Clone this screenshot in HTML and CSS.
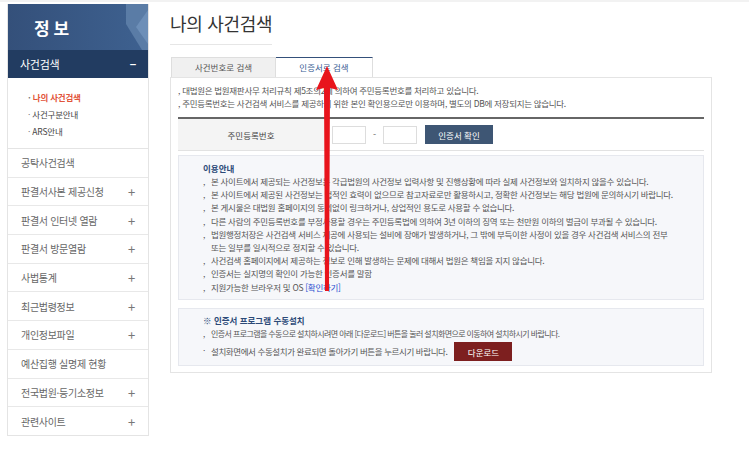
FILE: index.html
```html
<!DOCTYPE html>
<html lang="ko">
<head>
    <meta charset="UTF-8">
    <title>나의 사건검색</title>
    <link rel="stylesheet" href="styles.css">
</head>
<body>
    <div class="page">
        <div class="sidebar">
            <div class="side-head">
                <span>정 보</span>
                <svg class="side-deco" width="40" height="46" viewBox="0 0 40 46">
                    <polygon points="18,0 40,0 40,46 34,46 18,20" fill="#5a7ca6"/>
                    <polygon points="40,6 40,40 28,23" fill="#6d8fb8"/>
                </svg>
            </div>
            <div class="menu-open">사건검색 <span>−</span></div>
            <ul class="submenu">
                <li class="on">나의 사건검색</li>
                <li>사건구분안내</li>
                <li>ARS안내</li>
            </ul>
            <ul class="menu">
                <li>공탁사건검색</li>
                <li>판결서사본 제공신청 <span>+</span></li>
                <li>판결서 인터넷 열람 <span>+</span></li>
                <li>판결서 방문열람 <span>+</span></li>
                <li>사법통계 <span>+</span></li>
                <li>최근법령정보 <span>+</span></li>
                <li>개인정보파일 <span>+</span></li>
                <li>예산집행 실명제 현황</li>
                <li>전국법원·등기소정보 <span>+</span></li>
                <li>관련사이트 <span>+</span></li>
            </ul>
        </div>

        <div class="content">
            <h1>나의 사건검색</h1>
            <div class="tabs">
                <div class="tab">사건번호로 검색</div>
                <div class="tab active">인증서로 검색</div>
            </div>
            <div class="panel">
                <p class="notice">, 대법원은 법원재판사무 처리규칙 제5조의2에 의하여 주민등록번호를 처리하고 있습니다.</p>
                <p class="notice">, 주민등록번호는 사건검색 서비스를 제공하기 위한 본인 확인용으로만 이용하며, 별도의 DB에 저장되지는 않습니다.</p>

                <div class="form-row">
                    <div class="label">주민등록번호</div>
                    <div class="fields">
                        <input type="text" class="num">
                        <span class="dash">-</span>
                        <input type="text" class="num">
                        <button class="btn-cert">인증서 확인</button>
                    </div>
                </div>

                <div class="guide">
                    <h3>이용안내</h3>
                    <ul>
                        <li>본 사이트에서 제공되는 사건정보는 각급법원의 사건정보 입력사항 및 진행상황에 따라 실제 사건정보와 일치하지 않을수 있습니다.</li>
                        <li>본 사이트에서 제공된 사건정보는 법적인 효력이 없으므로 참고자료로만 활용하시고, 정확한 사건정보는 해당 법원에 문의하시기 바랍니다.</li>
                        <li>본 게시물은 대법원 홈페이지의 동의없이 링크하거나, 상업적인 용도로 사용할 수 없습니다.</li>
                        <li>다른 사람의 주민등록번호를 부정사용할 경우는 주민등록법에 의하여 3년 이하의 징역 또는 천만원 이하의 벌금이 부과될 수 있습니다.</li>
                        <li>법원행정처장은 사건검색 서비스 제공에 사용되는 설비에 장애가 발생하거나, 그 밖에 부득이한 사정이 있을 경우 사건검색 서비스의 전부<br>또는 일부를 일시적으로 정지할 수 있습니다.</li>
                        <li>사건검색 홈페이지에서 제공하는 정보로 인해 발생하는 문제에 대해서 법원은 책임을 지지 않습니다.</li>
                        <li>인증서는 실지명의 확인이 가능한 인증서를 말함</li>
                        <li>지원가능한 브라우저 및 OS <a href="#">[확인하기]</a></li>
                    </ul>
                </div>

                <div class="guide install">
                    <h3>※ 인증서 프로그램 수동설치</h3>
                    <ul>
                        <li class="tight">인증서 프로그램을 수동으로 설치하시려면 아래 [다운로드] 버튼을 눌러 설치화면으로 이동하여 설치하시기 바랍니다.</li>
                        <li class="dot">설치화면에서 수동설치가 완료되면 돌아가기 버튼을 누르시기 바랍니다. <button class="btn-down">다운로드</button></li>
                    </ul>
                </div>
            </div>
        </div>
    </div>

    <svg class="arrow" width="30" height="230" viewBox="0 0 30 230">
        <polygon points="15,0 26,24 18,22 17,225 13,225 12,22 4,24" fill="#e8141c"/>
    </svg>
</body>
</html>
```

FILE: styles.css
```css
body {
    margin: 0;
    background-color: #fff;
    font-family: "Noto Sans CJK KR", "Noto Sans", sans-serif;
    color: #555;
    border-top: 2px solid #f2f2f2;
}

ul {
    list-style: none;
    margin: 0;
    padding: 0;
}

.page {
    display: flex;
    align-items: flex-start;
    padding-left: 7px;
    padding-top: 2px;
}

/* 왼쪽 메뉴 */
.sidebar {
    width: 140px;
    border: 1px solid #e4e4e4;
    border-top: none;
}

.side-head {
    height: 46px;
    background: linear-gradient(90deg, #34507a, #3e6190);
    display: flex;
    align-items: center;
    justify-content: space-between;
    padding-left: 26px;
}

.side-head span {
    color: #fff;
    font-size: 17px;
    font-weight: bold;
    word-spacing: -1px;
}

.side-deco {
    display: block;
}

.menu-open {
    height: 28px;
    background-color: #223c61;
    color: #fff;
    font-size: 11px;
    letter-spacing: -0.3px;
    display: flex;
    align-items: center;
    justify-content: space-between;
    padding: 0 12px 0 12px;
}

.menu-open span {
    font-weight: bold;
}

.submenu {
    padding: 11px 0 8px 20px;
    border-bottom: 1px solid #e4e4e4;
}

.submenu li {
    font-size: 8.5px;
    letter-spacing: -0.2px;
    color: #444;
    height: 17px;
    line-height: 17px;
}

.submenu li::before {
    content: "· ";
    color: #777;
}

.submenu li.on {
    color: #e2543a;
    font-weight: bold;
}

.menu li {
    height: 27.7px;
    border-bottom: 1px solid #e8e8e8;
    display: flex;
    align-items: center;
    justify-content: space-between;
    padding: 0 13px 0 13px;
    font-size: 10px;
    letter-spacing: -0.3px;
    color: #666;
}

.menu li:last-child {
    border-bottom: none;
}

.menu li span {
    font-size: 13px;
    color: #777;
}

/* 본문 */
.content {
    margin-left: 21px;
    width: 542px;
}

h1 {
    font-size: 18px;
    font-weight: normal;
    letter-spacing: -0.3px;
    line-height: 26px;
    white-space: nowrap;
    color: #333;
    margin: 6px 0 0 0;
    padding-bottom: 8px;
    width: 102px;
    border-bottom: 1px solid #e6e6e6;
}

.tabs {
    display: flex;
    margin-top: 12px;
    padding-left: 1px;
}

.tab {
    width: 103px;
    height: 19px;
    line-height: 19px;
    text-align: center;
    font-size: 8.5px;
    color: #555;
    background-color: #f0f0f0;
    border: 1px solid #dedede;
    border-bottom: none;
}

.tab.active {
    width: 96px;
    background-color: #fff;
    color: #3a5e94;
    border-top: 1px solid #34507a;
    border-left: none;
}

.panel {
    border: 1px solid #e4e4e4;
    padding: 6px 7px 6px 7px;
}

.notice {
    margin: 0;
    font-size: 8.5px;
    letter-spacing: -0.3px;
    line-height: 13px;
    color: #555;
}

.form-row {
    display: flex;
    margin-top: 7px;
    border-top: 2px solid #666;
    border-bottom: 1px solid #e2e2e2;
    height: 31px;
}

.label {
    width: 146px;
    background-color: #f4f4f4;
    font-size: 8.5px;
    color: #444;
    display: flex;
    align-items: center;
    justify-content: center;
}

.fields {
    display: flex;
    align-items: center;
    padding-left: 8px;
}

.num {
    width: 34px;
    height: 18px;
    border: 1px solid #ddd;
    padding: 0;
    box-sizing: border-box;
}

.dash {
    width: 17px;
    text-align: center;
    font-size: 9px;
    color: #666;
}

.btn-cert {
    margin-left: 8px;
    height: 19px;
    width: 68px;
    border: none;
    background-color: #3e5674;
    color: #fff;
    font-family: inherit;
    font-size: 8.5px;
    padding: 0;
}

.guide {
    margin-top: 4px;
    background-color: #f6f7fa;
    border: 1px solid #e6e8ee;
    padding: 6px 0 5px 24px;
}

.guide h3 {
    margin: 0;
    font-size: 8.5px;
    color: #2c4a78;
    font-weight: bold;
    line-height: 13px;
}

.guide li {
    font-size: 8.5px;
    letter-spacing: -0.3px;
    line-height: 13.2px;
    color: #555;
    padding-left: 8px;
    position: relative;
}

.guide li::before {
    content: ",";
    position: absolute;
    left: 0;
    top: 0;
}

.guide a {
    color: #2a4fd0;
    text-decoration: none;
}

.install {
    margin-top: 8px;
    padding-top: 5px;
    padding-bottom: 4px;
}

.install li.tight {
    font-size: 8px;
    letter-spacing: -0.6px;
}

.install li.dot {
    display: flex;
    align-items: center;
    margin-top: 2px;
    letter-spacing: -0.4px;
}

.install li.dot::before {
    content: "·";
    top: 2px;
}

.btn-down {
    margin-left: 7px;
    width: 58px;
    height: 19px;
    border: none;
    background-color: #7d1f1f;
    color: #fff;
    font-family: inherit;
    font-size: 8.5px;
    padding: 0;
}

/* 표시용 화살표 */
.arrow {
    position: absolute;
    left: 312px;
    top: 66px;
}
```
